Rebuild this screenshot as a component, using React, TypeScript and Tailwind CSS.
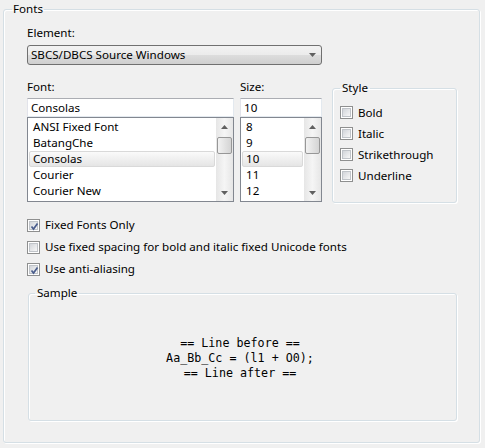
import React from "react";

const fonts = ["ANSI Fixed Font", "BatangChe", "Consolas", "Courier", "Courier New"];
const sizes = ["8", "9", "10", "11", "12"];

function Tick() {
  return (
    <svg className="absolute left-0 top-0" width="13" height="13" viewBox="0 0 13 13">
      <path d="M3.5 6.5 L5.5 9 L9.5 3.5" fill="none" stroke="#4a5d8c" strokeWidth="1.7" />
    </svg>
  );
}

function Checkbox({ label, checked }: { label: string; checked?: boolean }) {
  return (
    <label className="flex items-center gap-[5px]">
      <span className="relative w-[13px] h-[13px] shrink-0 border border-[#8e8f8f] bg-white p-[1px]">
        <span className="block w-full h-full border border-[#c0c4c9] bg-gradient-to-br from-[#d2d5da] to-[#f7f7f7]" />
        {checked && <Tick />}
      </span>
      <span>{label}</span>
    </label>
  );
}

function Arrow({ down }: { down?: boolean }) {
  return (
    <svg width="7" height="4" viewBox="0 0 7 4">
      <path d={down ? "M0 0 H7 L3.5 4 Z" : "M0 4 H7 L3.5 0 Z"} fill="#606060" />
    </svg>
  );
}

function ScrollBar() {
  return (
    <div className="w-[17px] flex flex-col bg-gradient-to-r from-[#e6e6e6] via-[#f5f5f5] to-[#e6e6e6]">
      <div className="h-[17px] flex items-center justify-center">
        <Arrow />
      </div>
      <div className="flex-1 px-[1px] pt-[2px]">
        <div className="h-[17px] rounded-[2px] border border-[#979797] bg-gradient-to-r from-[#f2f2f2] to-[#d4d4d4]" />
      </div>
      <div className="h-[17px] flex items-center justify-center">
        <Arrow down />
      </div>
    </div>
  );
}

function ListBox({ items, selected }: { items: string[]; selected: string }) {
  return (
    <div className="h-[85px] flex border border-[#828790] bg-white">
      <div className="flex-1 px-[1px] pt-[1px]">
        {items.map((it) => (
          <div
            key={it}
            className={
              "h-[16px] leading-[14px] pl-[3px] border " +
              (it === selected
                ? "rounded-[2px] border-[#d9d9d9] bg-gradient-to-b from-[#fafafa] to-[#e5e5e5]"
                : "border-transparent")
            }
          >
            {it}
          </div>
        ))}
      </div>
      <ScrollBar />
    </div>
  );
}

function TextBox({ value }: { value: string }) {
  return (
    <div className="h-[19px] leading-[17px] pl-[3px] bg-white border border-[#e3e9ef] border-t-[#abadb3] border-l-[#e2e3ea]">
      {value}
    </div>
  );
}

export default function App() {
  return (
    <div className="w-[485px] h-[448px] bg-[#f0f0f0] pl-[3px] pt-[1px] text-[11.6px] leading-[16px] text-black font-['Segoe_UI','Noto_Sans',sans-serif]">
      <fieldset className="w-[477px] h-[442px] border border-[#d5dfe5] rounded-[3px] shadow-[inset_1px_1px_0_#fff,1px_1px_0_#fff]">
        <legend className="ml-[8px] px-[1px]">Fonts</legend>
        <div className="pl-[23px] pt-[8px]">
          <div>Element:</div>
          <div className="mt-[4px] w-[295px] h-[20px] flex items-center justify-between pl-[3px] pr-[5px] rounded-[3px] border border-[#707070] bg-[linear-gradient(#f2f2f2_0%,#ebebeb_50%,#dddddd_50%,#cfcfcf_100%)]">
            <span>SBCS/DBCS Source Windows</span>
            <Arrow down />
          </div>

          <div className="mt-[14px] flex">
            <div className="w-[207px]">
              <div className="h-[19px]">Font:</div>
              <TextBox value="Consolas" />
              <ListBox items={fonts} selected="Consolas" />
            </div>
            <div className="ml-[6px] w-[82px]">
              <div className="h-[19px]">Size:</div>
              <TextBox value="10" />
              <ListBox items={sizes} selected="10" />
            </div>
            <fieldset className="ml-[10px] mt-[1px] w-[125px] h-[123px] border border-[#d5dfe5] rounded-[3px] shadow-[inset_1px_1px_0_#fff,1px_1px_0_#fff]">
              <legend className="ml-[7px] px-[2px]">Style</legend>
              <div className="pl-[7px] pt-[6px]">
                {["Bold", "Italic", "Strikethrough", "Underline"].map((s) => (
                  <div key={s} className="h-[21px] flex items-center">
                    <Checkbox label={s} />
                  </div>
                ))}
              </div>
            </fieldset>
          </div>

          <div className="mt-[11px]">
            <div className="h-[22px] flex items-center">
              <Checkbox label="Fixed Fonts Only" checked />
            </div>
            <div className="h-[22px] flex items-center">
              <Checkbox label="Use fixed spacing for bold and italic fixed Unicode fonts" />
            </div>
            <div className="h-[22px] flex items-center">
              <Checkbox label="Use anti-aliasing" checked />
            </div>
          </div>

          <fieldset className="mt-[5px] ml-[1px] w-[429px] h-[136px] border border-[#d5dfe5] rounded-[3px] shadow-[inset_1px_1px_0_#fff,1px_1px_0_#fff]">
            <legend className="ml-[6px] px-[2px]">Sample</legend>
            <div className="h-[114px] flex flex-col items-center justify-center pr-[5px] font-['DejaVu_Sans_Mono',monospace] text-[11.7px] leading-[15px] whitespace-pre">
              <div>== Line before ==</div>
              <div>Aa_Bb_Cc = (l1 + O0);</div>
              <div>== Line after ==</div>
            </div>
          </fieldset>
        </div>
      </fieldset>
    </div>
  );
}
